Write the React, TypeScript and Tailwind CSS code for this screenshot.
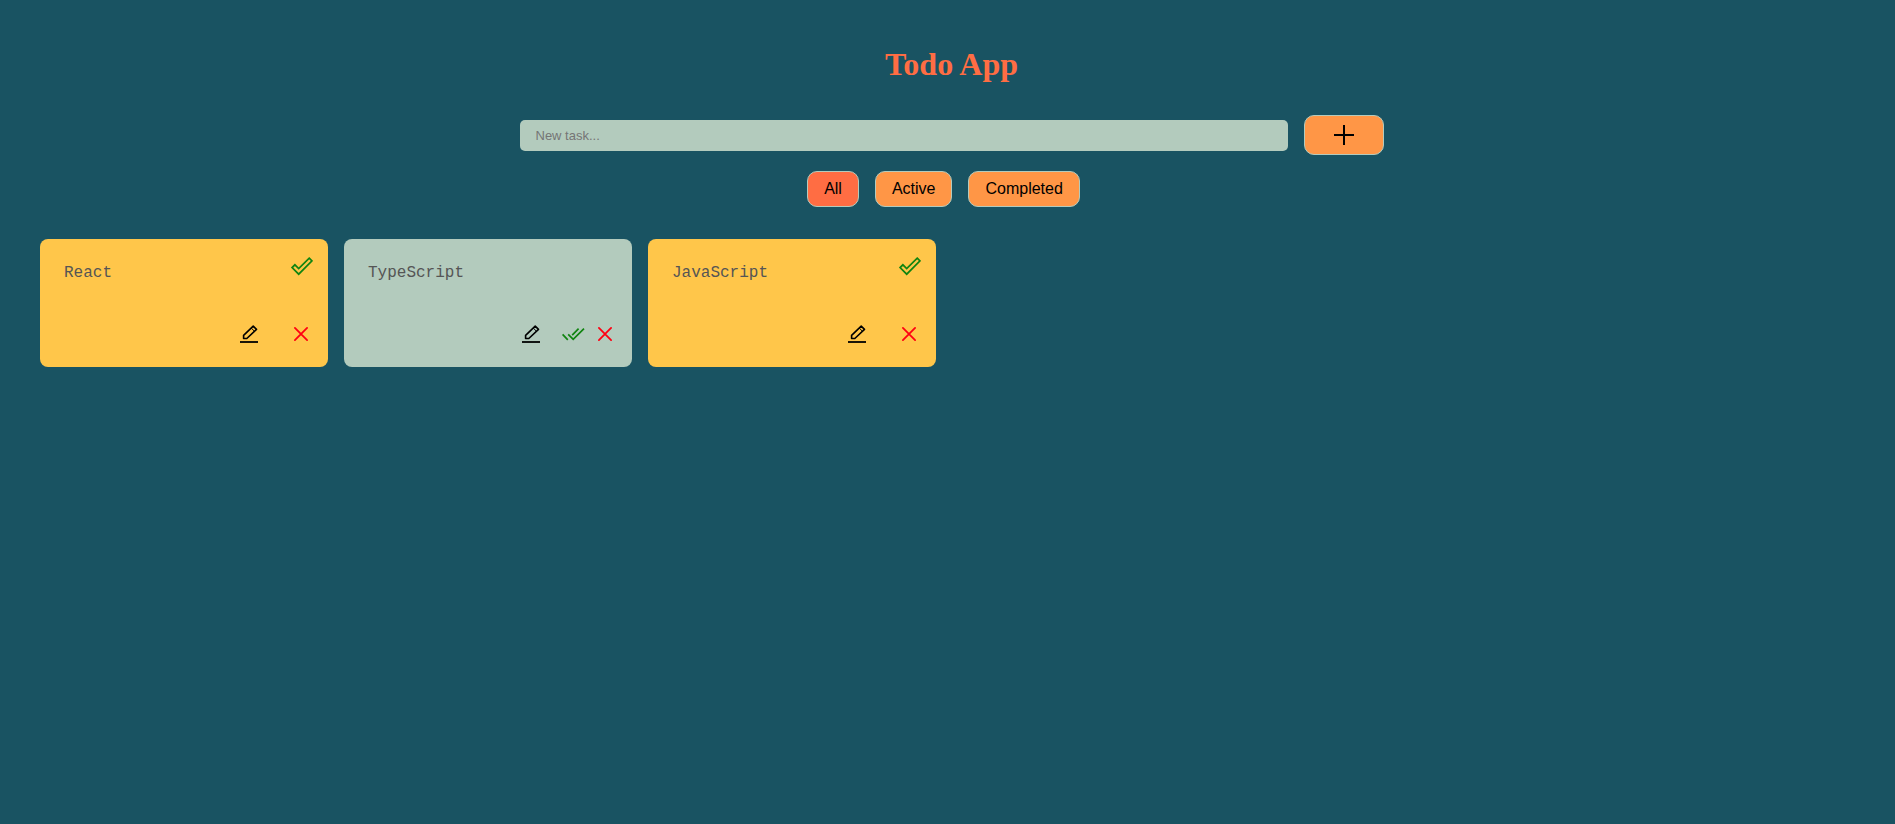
import { useState } from "react";

type Task = { id: number; title: string; done: boolean };
type Filter = "All" | "Active" | "Completed";

const filters: Filter[] = ["All", "Active", "Completed"];

function PlusIcon() {
  return (
    <svg width="24" height="24" viewBox="0 0 24 24" stroke="currentColor" strokeWidth="2" aria-hidden="true">
      <path d="M12 2v20M2 12h20" />
    </svg>
  );
}

function PencilIcon() {
  return (
    <svg width="24" height="24" viewBox="0 0 24 24" fill="none" stroke="currentColor" strokeWidth="1.6" aria-hidden="true">
      <path d="M6.6 16.5v-3.2l9.6-9.2 3.3 3.3-9.7 9.1z" strokeLinejoin="round" />
      <path d="M14.2 6l3.3 3.3" strokeWidth="1" />
      <path d="M3 20h18" strokeWidth="1.8" />
    </svg>
  );
}

function DoubleCheckIcon() {
  return (
    <svg width="24" height="24" viewBox="0 0 24 24" fill="none" stroke="currentColor" strokeWidth="1.7" aria-hidden="true">
      <path d="M1.6 12.4l5.2 5.4M7.2 12.4l5 5L23 6.6M11.2 13.2l6.4-6.6" />
    </svg>
  );
}

function CheckOutlineIcon() {
  return (
    <svg width="24" height="24" viewBox="0 0 24 24" fill="none" stroke="currentColor" strokeWidth="1.7" aria-hidden="true">
      <path d="M20.2 3.1l2.8 2.8L9.7 19.2l-6.6-6.6 2.8-2.8 3.8 3.8z" />
    </svg>
  );
}

function CrossIcon() {
  return (
    <svg width="24" height="24" viewBox="0 0 24 24" fill="none" stroke="currentColor" strokeWidth="1.8" strokeLinecap="round" aria-hidden="true">
      <path d="M5.9 5.9l12.2 12.2M18.1 5.9L5.9 18.1" />
    </svg>
  );
}

function TaskCard({ task, onComplete, onDelete }: { task: Task; onComplete: () => void; onDelete: () => void }) {
  return (
    <li
      className={`flex h-32 w-72 flex-col justify-between rounded-lg pt-4 pr-[15px] pb-[21px] pl-6 ${
        task.done ? "bg-[#ffc64a]" : "bg-[#b3cbbd]"
      }`}
    >
      <div className="flex justify-between">
        <p className="pt-2 font-['Liberation_Mono','Courier_New',monospace] text-base leading-5 text-[#555]">
          {task.title}
        </p>
        {task.done && (
          <span className="text-[#108410]">
            <CheckOutlineIcon />
          </span>
        )}
      </div>
      <div className={`flex items-center justify-end ${task.done ? "gap-7" : "gap-2"}`}>
        <button type="button" aria-label={`Edit ${task.title}`} className={task.done ? "" : "mr-2.5"}>
          <PencilIcon />
        </button>
        {!task.done && (
          <button type="button" aria-label={`Complete ${task.title}`} onClick={onComplete} className="text-[#108410]">
            <DoubleCheckIcon />
          </button>
        )}
        <button type="button" aria-label={`Delete ${task.title}`} onClick={onDelete} className="text-[#ff0012]">
          <CrossIcon />
        </button>
      </div>
    </li>
  );
}

export default function App() {
  const [tasks, setTasks] = useState<Task[]>([
    { id: 1, title: "React", done: true },
    { id: 2, title: "TypeScript", done: false },
    { id: 3, title: "JavaScript", done: true },
  ]);
  const [filter, setFilter] = useState<Filter>("All");
  const [draft, setDraft] = useState("");

  const shown = tasks.filter((t) => filter === "All" || t.done === (filter === "Completed"));

  return (
    <main className="flex min-h-screen flex-col bg-[#195362] pt-11 pr-8 pl-10 font-['Liberation_Sans',Arial,sans-serif] text-black">
      <h1 className="text-center font-['Liberation_Serif','Times_New_Roman',serif] text-[32px] leading-10 font-bold text-[#ff6d43]">
        Todo App
      </h1>
      <form
        className="mt-[31px] flex items-center justify-center gap-4"
        onSubmit={(e) => {
          e.preventDefault();
          if (!draft.trim()) return;
          setTasks([...tasks, { id: Date.now(), title: draft.trim(), done: false }]);
          setDraft("");
        }}
      >
        <input
          type="text"
          aria-label="New task"
          placeholder="New task..."
          value={draft}
          onChange={(e) => setDraft(e.target.value)}
          className="h-[31px] w-full max-w-3xl rounded-[5px] bg-[#b3cbbd] px-4 text-[13px] placeholder:text-[#757575]"
        />
        <button
          type="submit"
          aria-label="Add task"
          className="flex h-10 w-20 shrink-0 items-center justify-center rounded-[10px] border border-[#b3cbbd] bg-[#ff9646]"
        >
          <PlusIcon />
        </button>
      </form>
      <div className="mt-4 mr-4 flex justify-center gap-4">
        {filters.map((f) => (
          <button
            key={f}
            type="button"
            aria-pressed={f === filter}
            onClick={() => setFilter(f)}
            className={`h-9 rounded-[10px] border border-[#b3cbbd] px-4 text-base leading-5 ${
              f === filter ? "bg-[#ff6d43]" : "bg-[#ff9646]"
            }`}
          >
            {f}
          </button>
        ))}
      </div>
      <ul className="mt-8 flex flex-wrap gap-4">
        {shown.map((task) => (
          <TaskCard
            key={task.id}
            task={task}
            onComplete={() => setTasks(tasks.map((t) => (t.id === task.id ? { ...t, done: true } : t)))}
            onDelete={() => setTasks(tasks.filter((t) => t.id !== task.id))}
          />
        ))}
      </ul>
    </main>
  );
}
